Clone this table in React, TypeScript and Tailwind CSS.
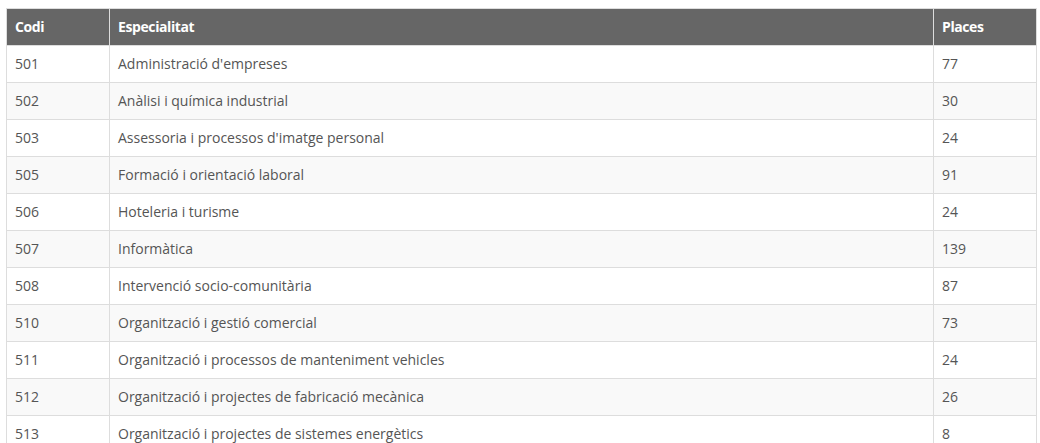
const rows: [string, string, string][] = [
  ["501", "Administració d'empreses", "77"],
  ["502", "Anàlisi i química industrial", "30"],
  ["503", "Assessoria i processos d'imatge personal", "24"],
  ["505", "Formació i orientació laboral", "91"],
  ["506", "Hoteleria i turisme", "24"],
  ["507", "Informàtica", "139"],
  ["508", "Intervenció socio-comunitària", "87"],
  ["510", "Organització i gestió comercial", "73"],
  ["511", "Organització i processos de manteniment vehicles", "24"],
  ["512", "Organització i projectes de fabricació mecànica", "26"],
  ["513", "Organització i projectes de sistemes energètics", "8"],
];

const App = () => {
  return (
    <div className="bg-white pt-[8px] pl-[6px] font-['Open_Sans',sans-serif]">
      <table className="w-[1030px] table-fixed border-collapse text-[14px]">
        <colgroup>
          <col className="w-[103px]" />
          <col className="w-[824px]" />
          <col className="w-[103px]" />
        </colgroup>
        <thead>
          <tr className="h-[37px] bg-[#666666] text-white">
            <th className="border border-[#dddddd] px-[8px] pb-[1px] text-left font-bold tracking-[-0.4px]">Codi</th>
            <th className="border border-[#dddddd] px-[8px] pb-[1px] text-left font-bold tracking-[-0.4px]">Especialitat</th>
            <th className="border border-[#dddddd] px-[8px] pb-[1px] text-left font-bold tracking-[-0.4px]">Places</th>
          </tr>
        </thead>
        <tbody className="text-[#555555]">
          {rows.map(([codi, nom, places], i) => (
            <tr key={codi} className={i % 2 === 1 ? "h-[37px] bg-[#f9f9f9]" : "h-[37px] bg-white"}>
              <td className="border border-[#dddddd] px-[8px] pb-[2px]">{codi}</td>
              <td className="border border-[#dddddd] px-[8px] pb-[2px]">{nom}</td>
              <td className="border border-[#dddddd] px-[8px] pb-[2px]">{places}</td>
            </tr>
          ))}
        </tbody>
      </table>
    </div>
  );
};

export default App;
